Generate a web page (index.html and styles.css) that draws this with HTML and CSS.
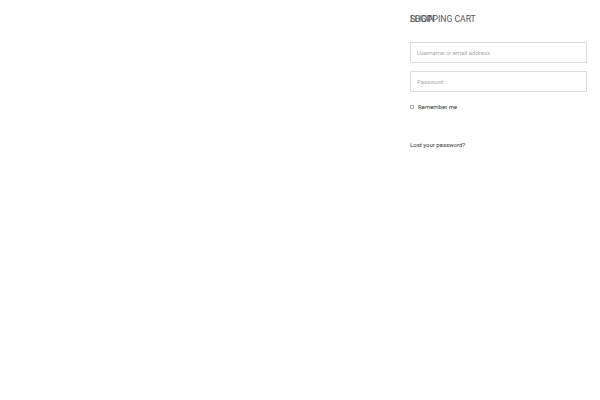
FILE: index.html
```html
<!DOCTYPE html>
<html>
<head>
<meta charset="utf-8">
<link rel="stylesheet" href="styles.css">
</head>
<body>
<div class="page">
  <div class="main"></div>
  <aside class="panel">
    <div class="titles">
      <h2 class="title">Login</h2>
      <h2 class="title">Shopping cart</h2>
    </div>
    <form class="login">
      <input class="field" type="text" placeholder="Username or email address">
      <input class="field" type="password" placeholder="Password">
      <label class="remember"><input class="check" type="checkbox"><span>Remember me</span></label>
      <a class="lost" href="#">Lost your password?</a>
    </form>
  </aside>
</div>
</body>
</html>
```
FILE: styles.css
```css
html, body { margin: 0; padding: 0; background: #fff; }
body { font-family: Roboto, "Liberation Sans", sans-serif; }
.page { display: flex; width: 600px; height: 400px; }
.main { flex: 1; }
.panel { width: 177px; margin-right: 13px; padding-top: 13px; display: flex; flex-direction: column; }
.titles { display: grid; }
.title { grid-area: 1 / 1; margin: 0; font-size: 8.6px; font-weight: 400; line-height: 13px; text-transform: uppercase; color: #555; }
.login { display: flex; flex-direction: column; margin-top: 16px; }
.field { box-sizing: border-box; width: 177px; height: 21px; margin: 0 0 8px 0; padding: 0 6px; border: 1px solid #ddd; border-radius: 0; font-family: Roboto, "Liberation Sans", sans-serif; font-size: 6px; color: #333; outline: none; }
.field::placeholder { color: #aaa; }
.remember { display: flex; align-items: center; margin-top: 1px; font-size: 6px; color: #333; height: 10px; }
.check { appearance: none; -webkit-appearance: none; box-sizing: border-box; width: 4px; height: 4px; margin: 2px 4px 0 0; padding: 0; border: 1px solid #aaa; background: #fff; border-radius: 0; }
.lost { margin-top: 29px; font-size: 6px; color: #333; text-decoration: none; line-height: 10px; }
```
